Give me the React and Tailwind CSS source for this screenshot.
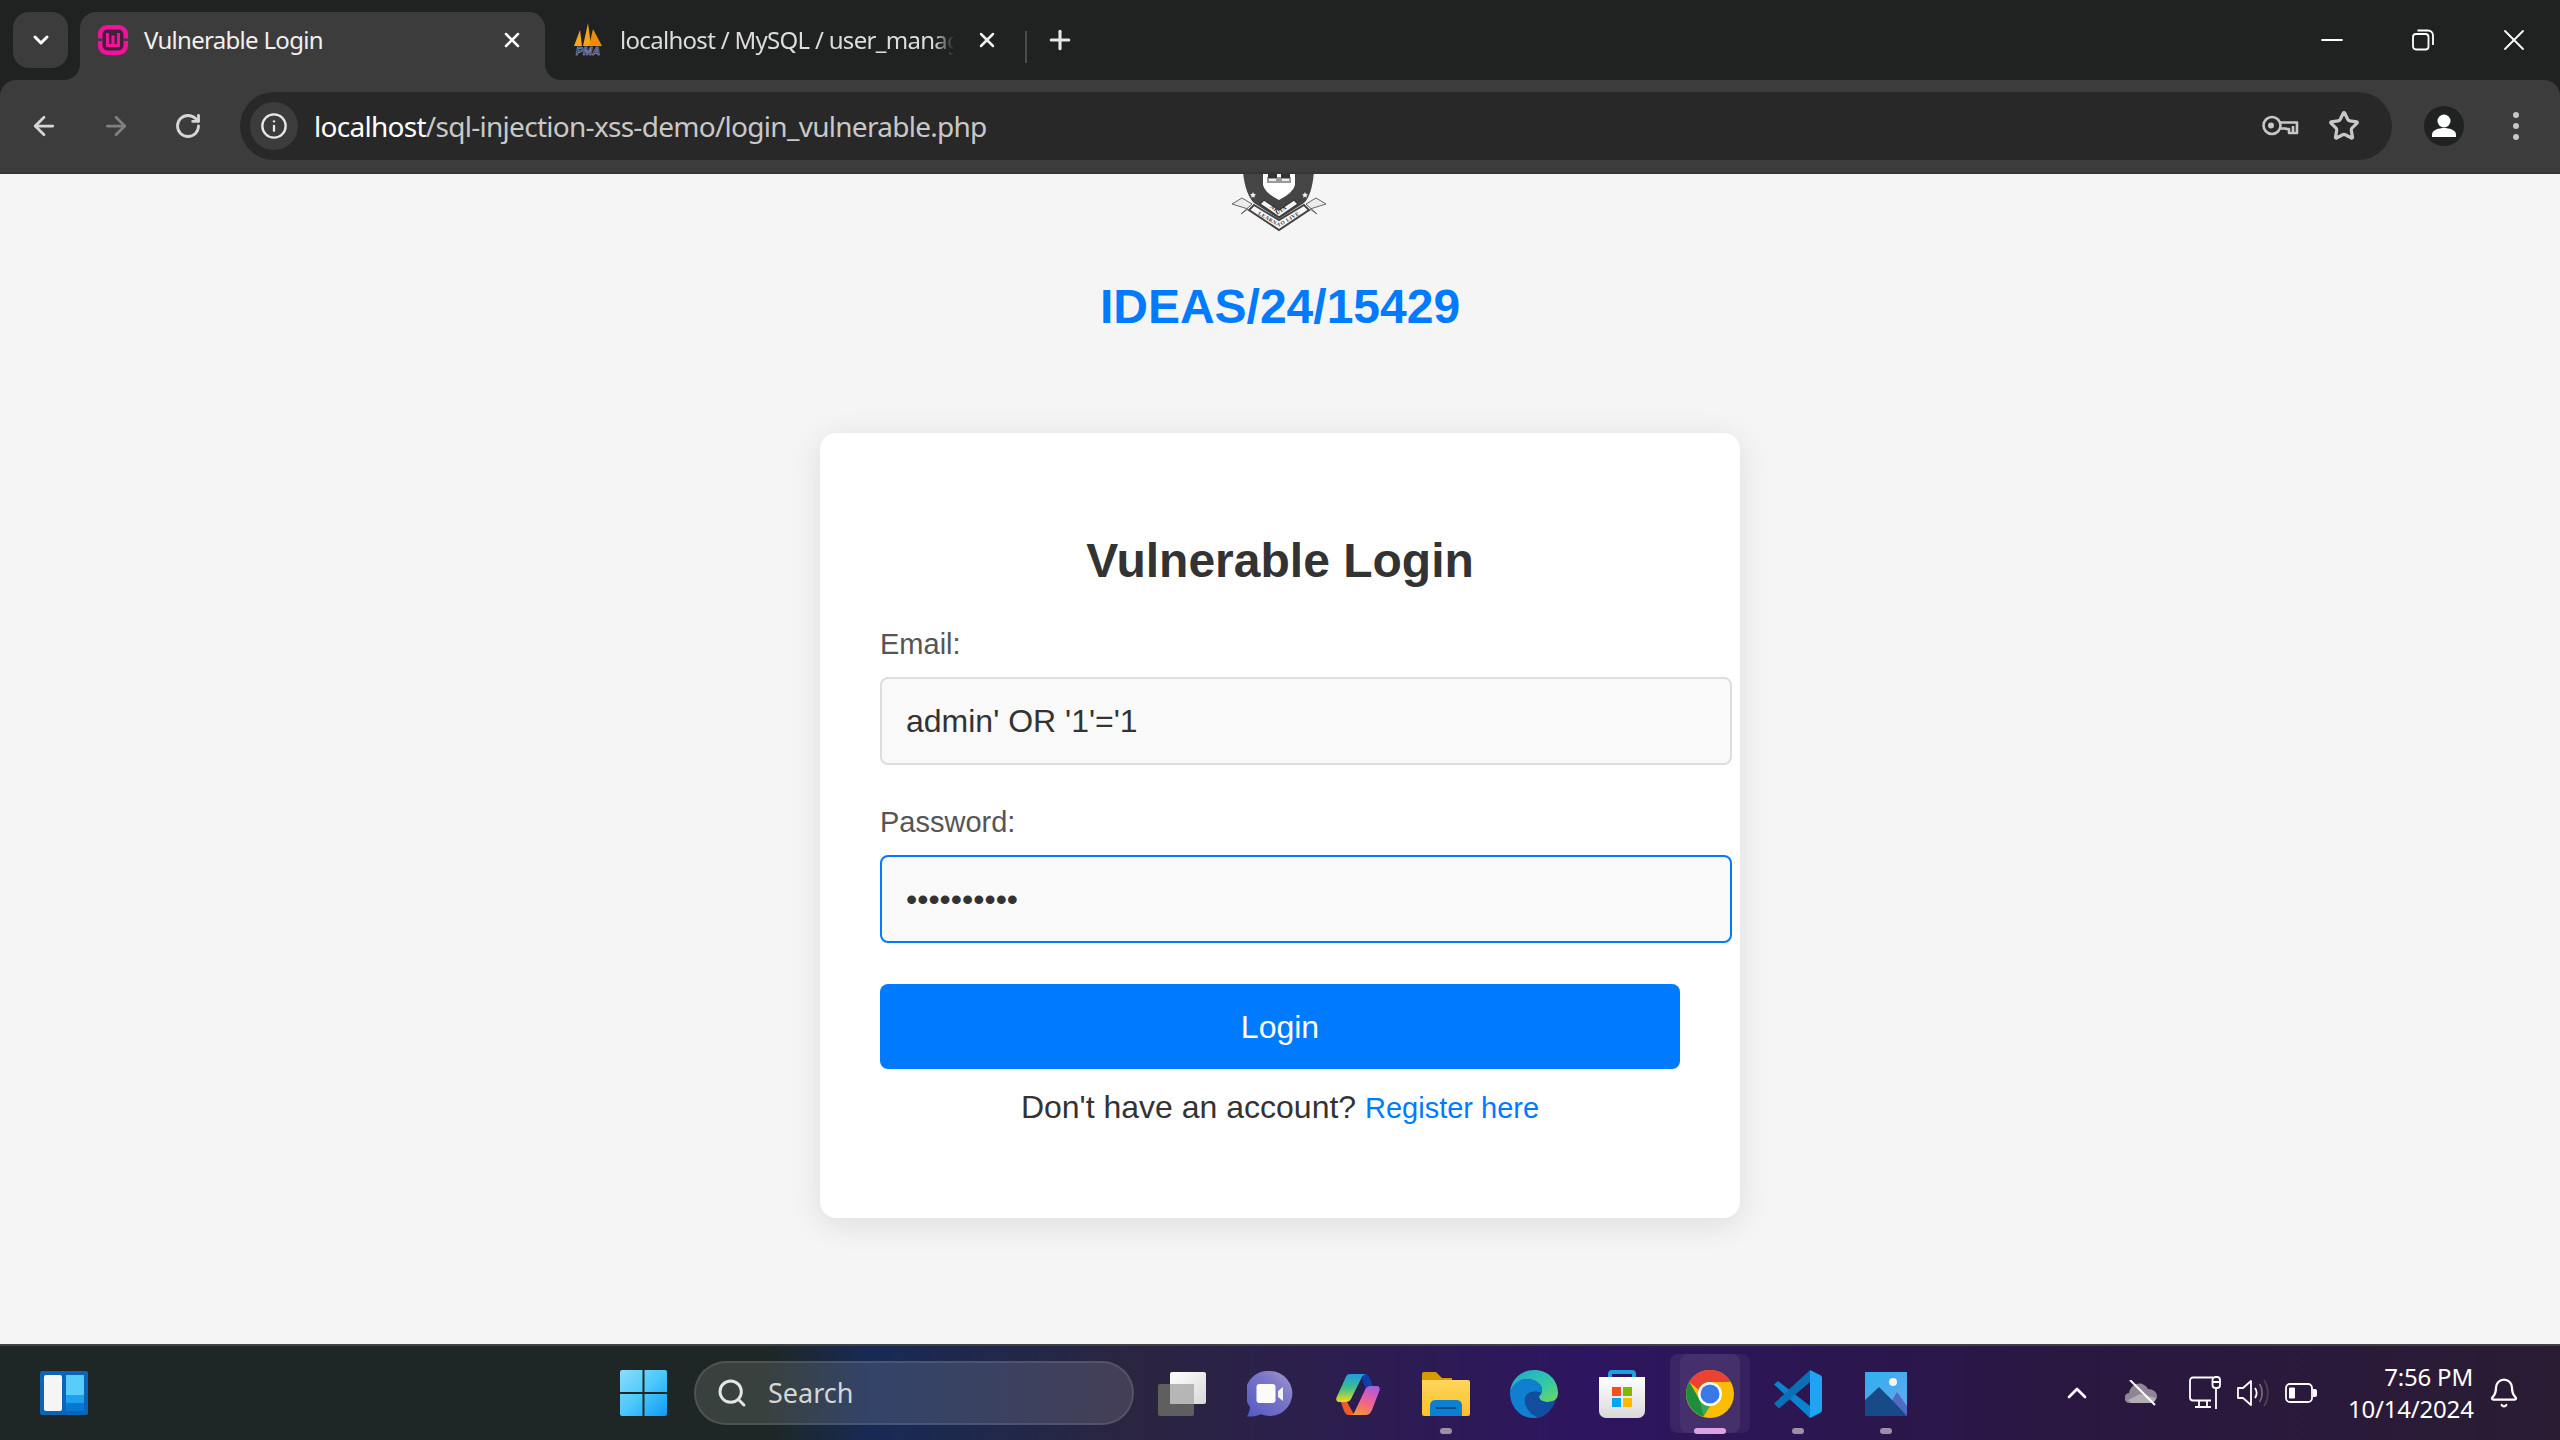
import React from "react";
import { ChevronDown, X, Plus, ArrowLeft, ArrowRight, RotateCw, Info, Star, Search, ChevronUp, Bell, Minus } from "lucide-react";

const ui = { fontFamily: '"Noto Sans", sans-serif' };
const web = { fontFamily: '"Liberation Sans", Arial, sans-serif' };

function Crest() {
  return (
    <svg width="96" height="58" viewBox="0 1 96 58" className="block">
      <defs>
        <path id="crA" d="M33 31 L47 41 L61 31" />
        <path id="crB" d="M19 37 L47 54 L75 37" />
      </defs>
      <path d="M11 -2 C12 12 16 24 22 30 L47 46 L72 30 C78 24 81 12 82 -2 Z" fill="#454545" />
      <path d="M31 -2 L31 12 Q33 20 47 27 Q61 20 63 12 L63 -2 Z" fill="#fff" />
      <rect x="35" y="4" width="24" height="6" fill="#999" />
      <rect x="36" y="1" width="9" height="4" fill="#333" />
      <rect x="49" y="1" width="9" height="4" fill="#333" />
      <rect x="37" y="6" width="7" height="2" fill="#eee" />
      <rect x="50" y="6" width="7" height="2" fill="#eee" />
      <path d="M21 19l1 2 2 .3-1.500 1.500.4 2-1.900-1-1.900 1 .4-2L18 21.300l2-.3zM73 19l1 2 2 .3-1.500 1.500.4 2-1.900-1-1.900 1 .4-2L70 21.300l2-.3z" fill="#eee" />
      <path d="M32 27 L47 37 L62 27 L66 31 L47 44 L28 31 Z" fill="#f4f4f4" stroke="#3a3a3a" strokeWidth="1.400" />
      <path d="M22 32 L47 47 L72 32 L77 37 L47 57 L17 37 Z" fill="#f8f8f8" stroke="#444" strokeWidth="2" />
      <path d="M16 36 L0 31 L10 25 L20 31 L9 41 Z M78 36 L94 31 L84 25 L74 31 L85 41 Z" fill="#ececec" stroke="#666" strokeWidth="1" />
      <text fontSize="5.500" fontWeight="700" fill="#222" fontFamily="Liberation Serif" letterSpacing="0.6">
        <textPath href="#crA" startOffset="6">AKUIA</textPath>
      </text>
      <text fontSize="5.200" fontWeight="700" fill="#333" fontFamily="Liberation Serif" letterSpacing="0.5">
        <textPath href="#crB" startOffset="8">LEARN. TO LIVE</textPath>
      </text>
    </svg>
  );
}

function WampIcon() {
  return (
    <svg width="32" height="32" viewBox="0 0 32 32">
      <rect x="1" y="1" width="30" height="30" rx="9" fill="#f0139a" />
      <rect x="5.500" y="5.500" width="21" height="21" rx="5" fill="#43203a" />
      <rect x="0" y="14.500" width="6" height="2.500" fill="#3c3c3c" />
      <rect x="26" y="14.500" width="6" height="2.500" fill="#3c3c3c" />
      <path d="M10.500 9v12.500h11V9M16 11.500v10" fill="none" stroke="#f0139a" strokeWidth="3" />
    </svg>
  );
}

function PmaIcon() {
  return (
    <svg width="34" height="34" viewBox="0 0 34 34">
      <path d="M3 23 L9 7 L11 23 Z" fill="#f5a623" />
      <path d="M12 23 L17 0 L20 23 Z" fill="#f7a21b" />
      <path d="M18 23 L22 6 L31 23 Z" fill="#ef8a0d" />
      <text x="17" y="31.500" textAnchor="middle" fontSize="11" fontWeight="700" fontStyle="italic" fill="#2c3573" stroke="#b9c0de" strokeWidth="0.400" fontFamily="Liberation Sans">PMA</text>
    </svg>
  );
}

function KeyIcon() {
  return (
    <svg width="38" height="22" viewBox="0 0 38 22" fill="none" stroke="#c7c7c7" strokeWidth="2.600">
      <circle cx="11" cy="10.500" r="8.500" />
      <circle cx="10" cy="10.500" r="3" fill="#c7c7c7" stroke="none" />
      <path d="M19.500 7.500H36V18H28V14H25V13.500H19.500" strokeLinejoin="round" />
      <path d="M32 11v7" />
    </svg>
  );
}

function RestoreIcon() {
  return (
    <svg width="22" height="22" viewBox="0 0 22 22" fill="none" stroke="#fff" strokeWidth="1.800">
      <rect x="1" y="5" width="15.500" height="15.500" rx="3" />
      <path d="M5.500 1.500H16a5 5 0 0 1 5 5V16" />
    </svg>
  );
}

function ProfileIcon() {
  return (
    <svg width="40" height="40" viewBox="0 0 40 40">
      <circle cx="20" cy="20" r="20" fill="#202222" />
      <circle cx="20" cy="15" r="6.500" fill="#fff" />
      <path d="M8 31v-2.500c0-4.500 7-6.500 12-6.500s12 2 12 6.500V31z" fill="#fff" />
    </svg>
  );
}

function WidgetsIcon() {
  return (
    <svg width="48" height="44" viewBox="0 0 48 44">
      <rect width="48" height="44" rx="2" fill="#0b64b5" />
      <rect x="4" y="4" width="18" height="36" rx="2" fill="#f5f5f5" />
      <rect x="26" y="4" width="18" height="20" fill="#58cdfb" />
      <rect x="26" y="24" width="18" height="8" fill="#1ba1ee" />
      <rect x="26" y="32" width="18" height="8" fill="#0878d6" />
    </svg>
  );
}

function StartIcon() {
  return (
    <svg width="47" height="46" viewBox="0 0 47 46">
      <defs>
        <linearGradient id="st" x1="0" y1="0" x2="1" y2="1">
          <stop offset="0" stopColor="#8fdcfd" />
          <stop offset="0.5" stopColor="#4bc8fb" />
          <stop offset="1" stopColor="#0f9bf5" />
        </linearGradient>
      </defs>
      <path d="M2 0h20.500v22H0V2a2 2 0 0 1 2-2zM24.500 0H45a2 2 0 0 1 2 2v20H24.500zM0 24h22.500v22H2a2 2 0 0 1-2-2zM24.500 24H47v20a2 2 0 0 1-2 2H24.500z" fill="url(#st)" />
    </svg>
  );
}

function TaskViewIcon() {
  return (
    <svg width="48" height="44" viewBox="0 0 48 44">
      <defs>
        <linearGradient id="tv" x1="0" y1="0" x2="1" y2="1">
          <stop offset="0" stopColor="#fff" />
          <stop offset="1" stopColor="#d8d8d8" />
        </linearGradient>
      </defs>
      <rect x="0" y="12" width="36" height="32" rx="2" fill="#5f5f5f" />
      <rect x="12" y="0" width="36" height="32" rx="2" fill="url(#tv)" />
      <path d="M12 12h24v20H12z" fill="#b0b0b0" opacity="0.9" />
    </svg>
  );
}

function TeamsIcon() {
  return (
    <svg width="46" height="46" viewBox="0 0 46 46">
      <defs>
        <linearGradient id="tm" x1="1" y1="0" x2="0" y2="1">
          <stop offset="0" stopColor="#a39ad0" />
          <stop offset="0.35" stopColor="#7d78c8" />
          <stop offset="1" stopColor="#5458c4" />
        </linearGradient>
      </defs>
      <path d="M23 0a22.500 22.500 0 1 1-9 43.200C10 45 5 45.800 0 45.500c2-3 2.800-6.500 3-9.500A22.500 22.500 0 0 1 23 0z" fill="url(#tm)" />
      <rect x="9.500" y="13" width="19" height="19" rx="3" fill="#fbfbfb" />
      <path d="M31 20l5-4v14l-5-4z" fill="#f2f2f2" />
    </svg>
  );
}

function CopilotIcon() {
  return (
    <svg width="44" height="41" viewBox="0 0 44 41">
      <defs>
        <linearGradient id="c1" x1="0" y1="0" x2="0" y2="1">
          <stop offset="0" stopColor="#1d9be8" />
          <stop offset="0.5" stopColor="#3fc08a" />
          <stop offset="1" stopColor="#f2da1a" />
        </linearGradient>
        <linearGradient id="c2" x1="0.8" y1="0" x2="0.3" y2="1">
          <stop offset="0" stopColor="#a85ae0" />
          <stop offset="0.55" stopColor="#f0638f" />
          <stop offset="1" stopColor="#f7933a" />
        </linearGradient>
      </defs>
      <path d="M28 0c3 0 5 1.500 6 5l3 8h-8l-3-8z" fill="#0f3fa8" />
      <path d="M11 28l5 9c1 2 2 4 5 4h-8c-3 0-4-2-5-4l-3-9z" fill="#ef5a2a" />
      <path d="M14 0h17c-3 0-5 2-6 5L15 25c-1 2-3 3-5 3H3c-2 0-3.500-2-2.500-4.500L9 5c1-3 2-5 5-5z" fill="url(#c1)" />
      <path d="M36 12h5c2 0 3.500 2 2.500 4.500L36 36c-1.500 3-3 5-7 5H13c3 0 5-1 6-4l10-21c1-3 3-4 7-4z" fill="url(#c2)" />
    </svg>
  );
}

function ExplorerIcon() {
  return (
    <svg width="48" height="44" viewBox="0 0 48 44">
      <defs>
        <linearGradient id="ex" x1="0" y1="0" x2="0" y2="1">
          <stop offset="0" stopColor="#ffd65c" />
          <stop offset="1" stopColor="#fcbf2a" />
        </linearGradient>
      </defs>
      <path d="M0 2a2 2 0 0 1 2-2h12l6 6h10v6H0z" fill="#d99a00" />
      <path d="M0 8h46a2 2 0 0 1 2 2v32a2 2 0 0 1-2 2H2a2 2 0 0 1-2-2z" fill="url(#ex)" />
      <path d="M8 44V34c0-4 2-6 6-6h20c4 0 6 2 6 6v10z" fill="#0d7fd1" />
      <rect x="14" y="35" width="20" height="2" fill="#0a4d8c" />
    </svg>
  );
}

function EdgeIcon() {
  return (
    <svg width="48" height="48" viewBox="0 0 48 48">
      <defs>
        <linearGradient id="e1" x1="0" y1="0" x2="1" y2="1">
          <stop offset="0" stopColor="#1fa7d7" />
          <stop offset="0.6" stopColor="#34c9a4" />
          <stop offset="1" stopColor="#71d75a" />
        </linearGradient>
      </defs>
      <path d="M24 0c14 0 24 10 24 23 0 6-4 9-10 9-5 0-9-2-9-5 0-2 3-3 3-7 0-6-7-11-15-11C10 9 3 15 0 22 1 10 11 0 24 0z" fill="url(#e1)" />
      <path d="M0 22c2-8 10-13 17-13 8 0 15 5 15 11 0 1 0 2-1 3-6-3-15-1-16 6-1 7 5 15 14 18-2 1-4 1-6 1C10 48 0 37 0 22z" fill="#0f7fd0" />
      <path d="M15 29c1-7 10-9 16-6-1 2-2 3-2 4 0 3 4 5 9 5 3 0 6-1 8-2-3 9-10 16-17 18-9-3-15-12-14-19z" fill="#114f9e" />
    </svg>
  );
}

function StoreIcon() {
  return (
    <svg width="46" height="48" viewBox="0 0 46 48">
      <defs>
        <linearGradient id="sb" x1="0" y1="0" x2="0" y2="1">
          <stop offset="0" stopColor="#ffffff" />
          <stop offset="1" stopColor="#d9d9d9" />
        </linearGradient>
      </defs>
      <path d="M11 11V4a2 2 0 0 1 2-2h20a2 2 0 0 1 2 2v7" fill="none" stroke="#1ba1e2" strokeWidth="4" />
      <path d="M0 7h46v34a7 7 0 0 1-7 7H7a7 7 0 0 1-7-7z" fill="url(#sb)" />
      <rect x="13" y="17" width="9" height="9" fill="#f25022" />
      <rect x="24" y="17" width="9" height="9" fill="#7fba00" />
      <rect x="13" y="28" width="9" height="9" fill="#00a4ef" />
      <rect x="24" y="28" width="9" height="9" fill="#ffb900" />
    </svg>
  );
}

function ChromeIcon() {
  return (
    <svg width="48" height="48" viewBox="0 0 48 48">
      <circle cx="24" cy="24" r="24" fill="#fbbc04" />
      <path d="M24 0a24 24 0 0 1 20.800 12H24a12 12 0 0 0-11.200 7.700L3.200 12A24 24 0 0 1 24 0z" fill="#ea4335" />
      <path d="M3.200 12l10.400 18A12 12 0 0 0 24 36L17.500 46.600A24 24 0 0 1 3.200 12z" fill="#34a853" />
      <path d="M3.200 12l10.400 18 3.900 16.600A24 24 0 0 1 3.200 12z" fill="#1e8e3e" />
      <circle cx="24" cy="24" r="12" fill="#fff" />
      <circle cx="24" cy="24" r="9.500" fill="#3b78e7" />
    </svg>
  );
}

function VsCodeIcon() {
  return (
    <svg width="48" height="48" viewBox="0 0 48 48">
      <path d="M0 14.500L4 11 L36 36 V48 Z" fill="#0a84d0" />
      <path d="M0 33.500L36 0 V12 L5 38.500 Z" fill="#0a70b5" />
      <path d="M36 0L46 5 a3 3 0 0 1 2 3 V40 a3 3 0 0 1-2 3 L36 48 Z" fill="#1fa3f2" />
    </svg>
  );
}

function PhotosIcon() {
  return (
    <svg width="42" height="44" viewBox="0 0 42 44">
      <defs>
        <linearGradient id="ph" x1="0" y1="0" x2="1" y2="1">
          <stop offset="0" stopColor="#2bb0ee" />
          <stop offset="1" stopColor="#6aa7ee" />
        </linearGradient>
      </defs>
      <rect width="42" height="44" fill="url(#ph)" />
      <circle cx="28" cy="10" r="4" fill="#f4f4f4" />
      <path d="M24 34l8-14 10 14v10H24z" fill="#5269c5" />
      <path d="M0 28l14-13 14 14 14 15H0z" fill="#184a87" />
    </svg>
  );
}

function CloudOff() {
  return (
    <svg width="32" height="26" viewBox="0 0 32 26">
      <path d="M5 23a5 5 0 0 1-1-10c1-7 9-12 15-8 2 1 3 2 4 4 5 0 9 3 9 7s-3 7-7 7z" fill="#8f8594" />
      <path d="M3 20l12-6 16 4c-1 3-3 5-6 5H6z" fill="#b3adb5" />
      <path d="M5 0l25 25" stroke="#fff" strokeWidth="2" />
    </svg>
  );
}

function NetworkIcon() {
  return (
    <svg width="32" height="34" viewBox="0 0 32 34" fill="none" stroke="#fff" strokeWidth="1.800">
      <path d="M24 1.500H4a3 3 0 0 0-3 3v17a3 3 0 0 0 3 3h18" />
      <path d="M10 24.500v6M18 24.500v6M6 31h16" />
      <rect x="23.500" y="1" width="7.500" height="11" rx="3" />
      <path d="M24 6h7M27 12v21" />
    </svg>
  );
}

function SpeakerIcon() {
  return (
    <svg width="34" height="30" viewBox="0 0 34 30" fill="none" stroke="#fff" strokeWidth="1.800">
      <path d="M1 10h5l8-7v24l-8-7H1z" strokeLinejoin="round" />
      <path d="M18 10c2 3 2 7 0 10" />
      <path d="M22.500 6c3.500 5 3.500 13 0 18" stroke="#75687d" />
      <path d="M27 2c5 7 5 19 0 26" stroke="#4d4057" />
    </svg>
  );
}

function BatteryIcon() {
  return (
    <svg width="32" height="20" viewBox="0 0 32 20">
      <rect x="1" y="1" width="26" height="18" rx="4" fill="none" stroke="#fff" strokeWidth="1.800" />
      <rect x="4" y="4.500" width="6" height="11" rx="1" fill="#fff" />
      <path d="M28 6h2a2 2 0 0 1 2 2v4a2 2 0 0 1-2 2h-2z" fill="#fff" />
    </svg>
  );
}

function Flare({ side }) {
  return (
    <svg width="16" height="16" viewBox="0 0 16 16" className={side === "left" ? "absolute bottom-0 -left-4" : "absolute bottom-0 -right-4"}>
      <path d={side === "left" ? "M16 0v16H0C9 16 16 9 16 0z" : "M0 0v16h16C7 16 0 9 0 0z"} fill="#3c3c3c" />
    </svg>
  );
}

function TabStrip() {
  return (
    <div className="flex h-20 shrink-0 items-end bg-[#202222] text-[24px]" style={ui}>
      <div className="mb-3 ml-[13px] flex h-14 w-[55px] items-center justify-center rounded-2xl bg-[#3c3c3c]">
        <ChevronDown size={24} strokeWidth={3} color="#fff" />
      </div>
      <div className="relative ml-3 flex h-[68px] w-[465px] items-center rounded-t-2xl bg-[#3c3c3c] pb-[12px] pl-[17px] text-[#f0f0f0]">
        <Flare side="left" />
        <Flare side="right" />
        <WampIcon />
        <span className="ml-[15px] tracking-[-0.7px]">Vulnerable Login</span>
        <X size={24} strokeWidth={2.5} className="absolute left-[420px] top-[16px]" color="#fff" />
      </div>
      <div className="relative flex h-[68px] w-[480px] items-center pb-[12px] pl-[26px] text-[#dcdcdc]">
        <PmaIcon />
        <span className="ml-[15px] w-[334px] overflow-hidden whitespace-nowrap tracking-[-0.7px] [mask-image:linear-gradient(to_right,black_94%,transparent)]">localhost / MySQL / user_management</span>
        <X size={24} strokeWidth={2.5} className="ml-[21px]" color="#eee" />
      </div>
      <div className="mb-[17px] h-[32px] w-0.5 bg-[#4b4c4c]" />
      <Plus size={30} strokeWidth={2.5} color="#e6e6e6" className="mb-[25px] ml-[18px]" />
      <div className="mb-[28px] ml-auto flex h-6 items-center text-white">
        <Minus size={34} strokeWidth={1.3} />
        <div className="ml-[63px]"><RestoreIcon /></div>
        <X size={36} strokeWidth={1.2} className="ml-[62px] mr-[28px]" />
      </div>
    </div>
  );
}

function Toolbar() {
  return (
    <div className="flex h-[94px] shrink-0 items-center rounded-t-2xl border-b-2 border-[#363636] bg-[#3c3c3c] text-white" style={ui}>
      <ArrowLeft size={30} strokeWidth={2.2} color="#d6d6d6" className="ml-[29px]" />
      <ArrowRight size={30} strokeWidth={2.2} color="#808080" className="ml-[42px]" />
      <RotateCw size={28} strokeWidth={2.4} color="#d6d6d6" className="ml-[43px]" />
      <div className="ml-[38px] flex h-[68px] w-[2152px] items-center rounded-full bg-[#282828]">
        <div className="ml-2.5 flex size-12 items-center justify-center rounded-full bg-[#3c3c3c]">
          <Info size={28} strokeWidth={2} color="#e8e8e8" />
        </div>
        <span className="ml-[16px] text-[28px] tracking-[-0.72px] text-[#c8c8c8]">
          <span className="text-white">localhost</span>/sql-injection-xss-demo/login_vulnerable.php
        </span>
        <div className="ml-auto flex items-center">
          <KeyIcon />
          <Star size={32} strokeWidth={2.4} color="#c7c7c7" className="ml-[29px] mr-[32px]" />
        </div>
      </div>
      <div className="ml-8"><ProfileIcon /></div>
      <div className="ml-[49px] flex flex-col gap-[5px]">
        <div className="size-1.5 rounded-full bg-[#c7c7c7]" />
        <div className="size-1.5 rounded-full bg-[#c7c7c7]" />
        <div className="size-1.5 rounded-full bg-[#c7c7c7]" />
      </div>
    </div>
  );
}

function Page() {
  return (
    <div className="min-h-0 flex-1 overflow-hidden bg-[#f5f5f5]" style={web}>
      <div className="flex justify-center">
        <Crest />
      </div>
      <h1 className="mt-[47px] text-center text-[48px] leading-[55px] font-bold text-[#007bff]">IDEAS/24/15429</h1>
      <div className="mx-auto mt-[99px] h-[785px] w-[920px] rounded-[16px] bg-white px-[60px] pt-[97px] shadow-[0_6px_32px_rgba(0,0,0,0.1)]">
        <h2 className="text-center text-[48px] leading-[62px] font-bold text-[#333]">Vulnerable Login</h2>
        <label className="mt-[35px] block text-[29px] leading-[34px] text-[#555]">Email:</label>
        <input
          readOnly
          value="admin' OR '1'='1"
          className="mt-[16px] block h-[88px] w-[852px] rounded-[8px] border-2 border-[#ddd] bg-[#f9f9f9] px-[24px] text-[32px] text-[#333] outline-none"
          style={web}
        />
        <label className="mt-[40px] block text-[29px] leading-[34px] text-[#555]">Password:</label>
        <input
          readOnly
          type="password"
          value="aaaaaaaaaa"
          className="mt-[16px] block h-[88px] w-[852px] rounded-[8px] border-2 border-[#007bff] bg-[#f9f9f9] px-[24px] text-[32px] text-[#333] outline-none"
          style={web}
        />
        <button className="mt-[41px] block h-[85px] w-[800px] rounded-[8px] bg-[#007bff] text-[32px] text-white" style={web}>Login</button>
        <p className="mt-[19px] text-center text-[32px] leading-[38px] text-[#333]">
          Don't have an account? <span className="text-[29px] text-[#007bff]">Register here</span>
        </p>
      </div>
    </div>
  );
}

function Slot({ children, dot, active }) {
  return (
    <div className="relative flex h-full w-[88px] shrink-0 items-center justify-center">
      {children}
      {dot && <div className="absolute bottom-[6px] h-1.5 w-3 rounded-full bg-[#9c90a8]" />}
      {active && <div className="absolute bottom-[6px] h-1.5 w-8 rounded-full bg-[#dca0e4]" />}
    </div>
  );
}

function Taskbar() {
  return (
    <div className="flex h-24 shrink-0 items-center border-t-2 border-[#3f4142] bg-[linear-gradient(90deg,#1e2725_0%,#1e2725_30%,#172a55_34%,#2a2540_44%,#2e1560_62%,#2a1742_80%,#2a1c33_100%)] text-white" style={ui}>
      <div className="ml-10"><WidgetsIcon /></div>
      <div className="ml-[532px]"><StartIcon /></div>
      <div className="ml-[27px] flex h-16 w-[440px] items-center rounded-full border-2 border-[#ffffff1a] bg-[#ffffff1f] pl-[20px]">
        <Search size={32} strokeWidth={2.2} color="#e5e5e5" />
        <span className="ml-[20px] text-[27px] text-[#d5d5d5]">Search</span>
      </div>
      <div className="ml-[4px] flex h-full items-center pt-[2px]">
        <Slot><TaskViewIcon /></Slot>
        <Slot><TeamsIcon /></Slot>
        <Slot><CopilotIcon /></Slot>
        <Slot dot><ExplorerIcon /></Slot>
        <Slot><EdgeIcon /></Slot>
        <Slot><StoreIcon /></Slot>
        <Slot active>
          <div className="absolute right-[4px] top-[6px] h-[79px] w-[70px] rounded-lg bg-[#ffffff0d]" />
          <div className="absolute left-[4px] top-[6px] h-[79px] w-[70px] rounded-lg bg-[#ffffff12]" />
          <div className="relative"><ChromeIcon /></div>
        </Slot>
        <Slot dot><VsCodeIcon /></Slot>
        <Slot dot><PhotosIcon /></Slot>
      </div>
      <div className="ml-auto flex items-center">
        <ChevronUp size={32} strokeWidth={2} color="#fff" />
        <div className="ml-[32px]"><CloudOff /></div>
        <div className="ml-[32px]"><NetworkIcon /></div>
        <div className="ml-[16px]"><SpeakerIcon /></div>
        <div className="ml-[14px]"><BatteryIcon /></div>
        <div className="ml-[31px] w-[125px] text-right text-[24px] leading-[32px] tracking-[-0.2px]">
          <div>7:56 PM</div>
          <div>10/14/2024</div>
        </div>
        <Bell size={32} strokeWidth={1.7} className="ml-[15px] mr-[40px]" />
      </div>
    </div>
  );
}

export default function App() {
  return (
    <div className="flex h-[1440px] w-[2560px] flex-col overflow-hidden bg-[#202222]">
      <TabStrip />
      <Toolbar />
      <Page />
      <Taskbar />
    </div>
  );
}
